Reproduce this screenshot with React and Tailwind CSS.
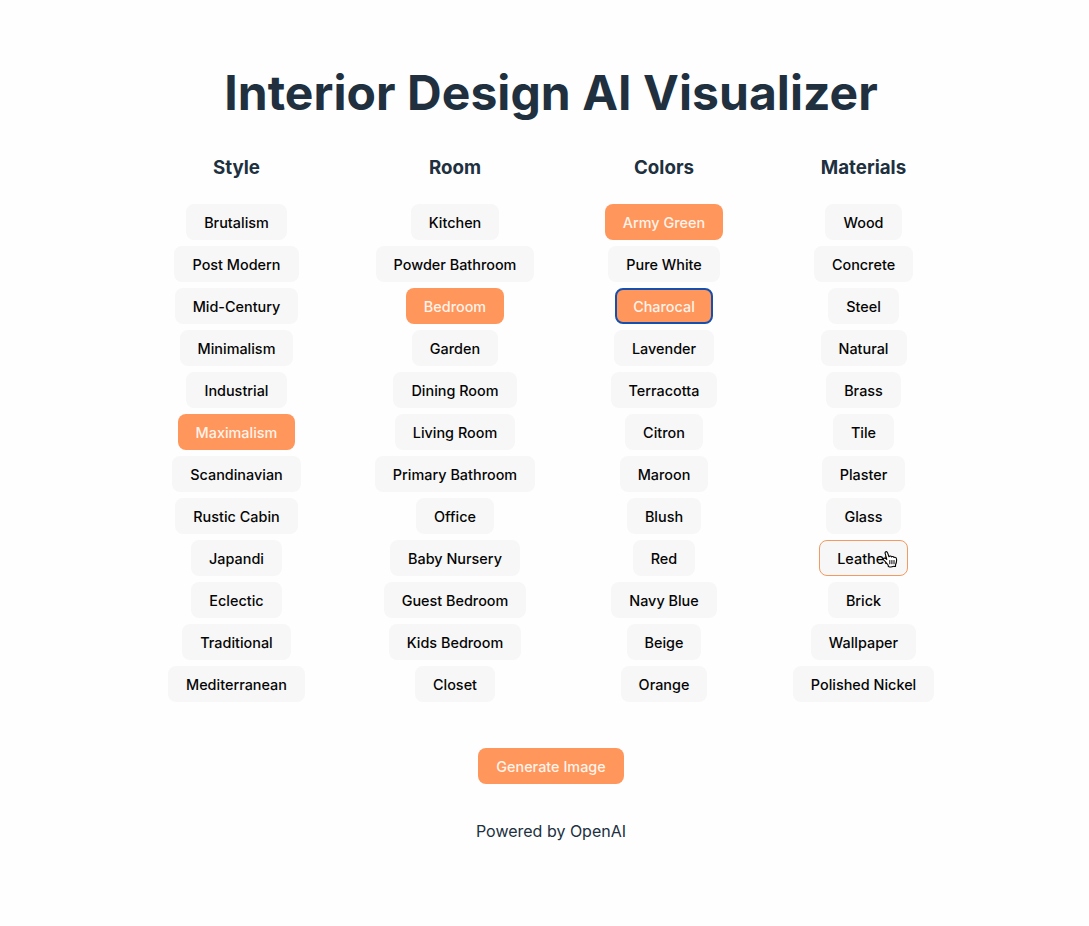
const columns = [
  { title: "Style", box: "w-[137px]", items: ["Brutalism", "Post Modern", "Mid-Century", "Minimalism", "Industrial", "Maximalism", "Scandinavian", "Rustic Cabin", "Japandi", "Eclectic", "Traditional", "Mediterranean"] },
  { title: "Room", box: "w-[160px]", items: ["Kitchen", "Powder Bathroom", "Bedroom", "Garden", "Dining Room", "Living Room", "Primary Bathroom", "Office", "Baby Nursery", "Guest Bedroom", "Kids Bedroom", "Closet"] },
  { title: "Colors", box: "w-[118px]", items: ["Army Green", "Pure White", "Charocal", "Lavender", "Terracotta", "Citron", "Maroon", "Blush", "Red", "Navy Blue", "Beige", "Orange"] },
  { title: "Materials", box: "w-[141px]", items: ["Wood", "Concrete", "Steel", "Natural", "Brass", "Tile", "Plaster", "Glass", "Leather", "Brick", "Wallpaper", "Polished Nickel"] },
];
const selected = ["Maximalism", "Bedroom", "Army Green", "Charocal"];

function Pointer() {
  return (
    <svg className="absolute left-[62px] top-[9px]" width="17" height="18" viewBox="0 0 17 18" fill="white" stroke="black" strokeWidth="1.1" strokeLinejoin="round" strokeLinecap="round">
      <path d="M6.3 16.4 L6.1 15 C5.3 14 4.4 13.2 3.6 12 C2.9 11 1.6 10.3 1.2 9.2 C1.3 7.6 3.2 7.9 4.8 9.4 L3.2 3.6 C2.6 1.4 4.9 1 5.6 2.9 L7 6.7 C7.5 5.6 9.1 5.8 9.6 6.9 C10.2 6.1 11.6 6.4 12 7.5 C12.9 6.8 14.4 7.4 14.5 8.9 C14.8 11.2 14.5 12.7 13.6 14.4 L13.5 16.4 C12.4 16.8 11.6 15.8 10.9 16.6 C10.2 16.9 7.3 16.8 6.3 16.4 Z" />
      <path d="M7.8 10.5v3.3 M9.9 10.5v3.3 M12 10.5v3.3" fill="none" strokeWidth="1" />
    </svg>
  );
}

function Option({ label }) {
  const tone = selected.includes(label) ? "bg-[#ff965b] text-[#fff3ea]" : "bg-[#f7f7f7] text-[#050505]";
  const edge = label === "Charocal" ? "border-2 border-[#1550b0] px-4" : label === "Leather" ? "border border-[#f39a60] px-[17px]" : "border border-transparent px-[17px]";
  return (
    <button className={`relative flex h-9 items-center whitespace-nowrap rounded-lg pt-0.5 text-[14.4px] font-medium leading-5 tracking-[0.01px] ${tone} ${edge}`}>
      {label}
      {label === "Leather" && <Pointer />}
    </button>
  );
}

export default function App() {
  return (
    <main className="flex h-[926px] w-full flex-col items-center bg-[#fefefe] pl-[13px] font-['Inter',sans-serif] text-[#20303e]">
      <h1 className="mt-[64px] whitespace-nowrap text-[48px] font-bold leading-[58px] tracking-[0.06px]">Interior Design AI Visualizer</h1>
      <div className="mt-[34px] flex w-[766px] justify-between">
        {columns.map((c) => (
          <section key={c.title} className={`flex flex-col items-center ${c.box}`}>
            <h2 className="mb-6 text-[18.72px] font-bold leading-6">{c.title}</h2>
            <div className="flex flex-col items-center gap-1.5">
              {c.items.map((i) => <Option key={i} label={i} />)}
            </div>
          </section>
        ))}
      </div>
      <button className="mt-[46px] flex h-9 items-center rounded-lg bg-[#ff965b] px-[18px] pt-0.5 text-[14.4px] font-medium leading-5 tracking-[0.02px] text-[#fff3ea]">Generate Image</button>
      <p className="mt-[35px] text-[16px] leading-6">Powered by OpenAI</p>
    </main>
  );
}
